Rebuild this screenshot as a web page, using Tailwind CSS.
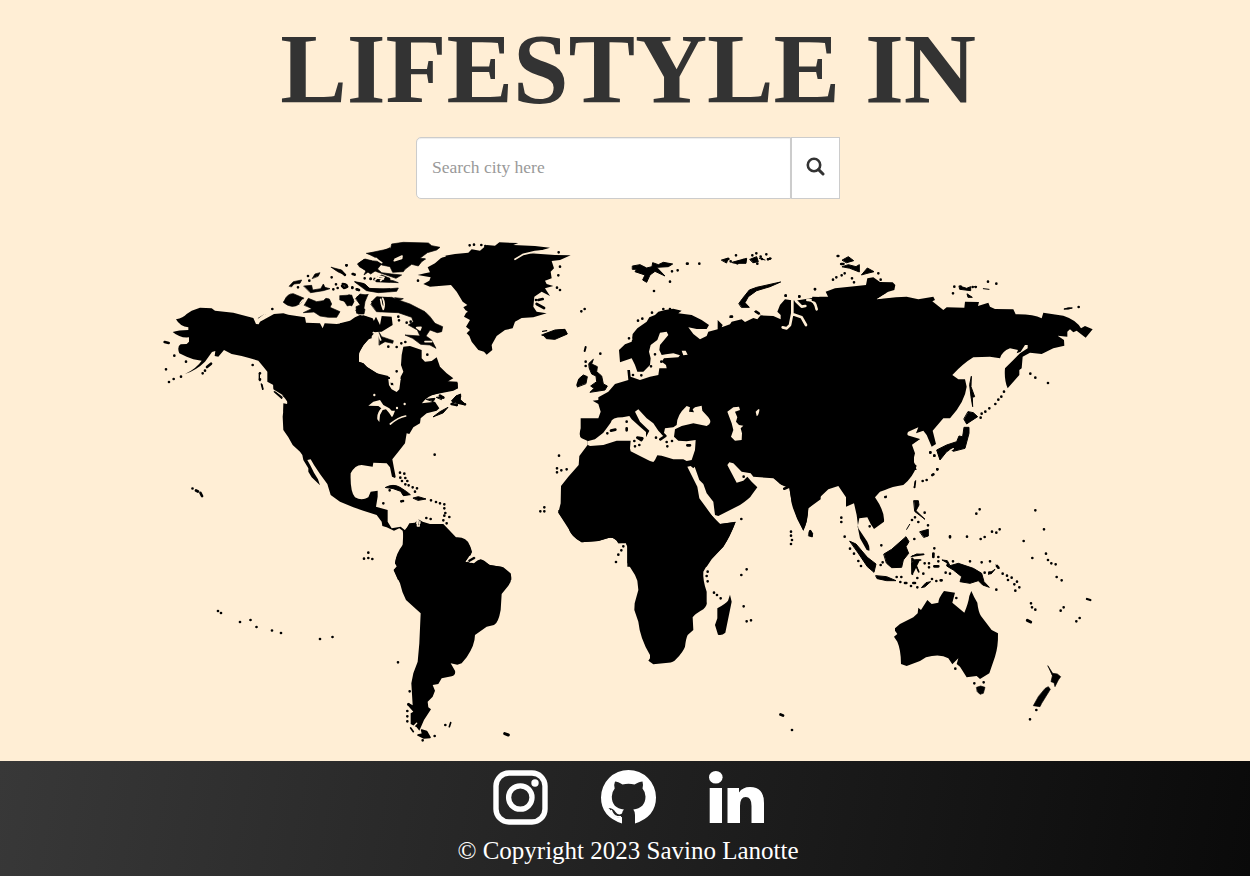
<!DOCTYPE html>
<html lang="en">
<head>
<meta charset="utf-8">
<title>Lifestyle In</title>
<script src="https://cdn.jsdelivr.net/npm/@tailwindcss/browser@4"></script>
</head>
<body class="flex h-[876px] flex-col overflow-hidden bg-[#ffeed5] font-['Liberation_Serif',serif]">
<header class="flex flex-col items-center pt-[14px]">
  <h1 class="h-[110px] pl-[6px] text-[100px] leading-[110px] font-bold tracking-[-0.15px] whitespace-nowrap text-[#333]">LIFESTYLE IN</h1>
  <form class="mt-[13px] ml-[6px] flex h-[62px] w-[424px]">
    <input class="w-[375px] rounded-l-[5px] border border-[#ccc] bg-white px-[15px] pb-[2px] text-[17.5px] shadow-[inset_0_1px_1px_rgba(0,0,0,0.075)] placeholder:text-[#999]" placeholder="Search city here">
    <button type="button" aria-label="Search" class="flex w-[49px] items-center justify-center border border-[#ccc] bg-white pb-[4px]">
      <svg class="size-[19px]" viewBox="0 0 19 19" fill="none" stroke="#333"><circle cx="8" cy="8" r="6.2" stroke-width="2.6"/><path d="M12.6 12.6L17 17" stroke-width="3" stroke-linecap="round"/></svg>
    </button>
  </form>
</header>
<main class="h-[562px] shrink-0">
<svg class="h-[562px] w-[1250px]" viewBox="0 199 1250 562" stroke-linecap="round" stroke-linejoin="round">
<!-- Alaska and western Canada -->
<g transform="translate(150 230) scale(.33333)">
<path d="M78 268Q100 264 110 252L125 242 150 233 185 235 195 242 250 248 310 264 318 282 326 283 330 275 372 252 400 250 415 254 440 258 465 262 468 278 510 280 518 295 524 280 560 282 600 276 612 272 628 262 640 256 668 265 675 280 684 296 668 315 640 345 627 370 627 395 640 400 652 412 690 435 720 442V545H400V520L412 522 408 508 390 490 372 480 370 465 352 455 352 425 340 410 325 392 300 385 275 378 245 372 222 360 205 380 194 378 196 363 186 366 165 395Q140 420 105 432 140 415 155 392L130 388 110 380 88 370Q80 350 92 343L110 342 117 335V322Q90 325 68 306 85 300 115 300V292Q90 290 78 268Z"/>
<path d="M324 265L346 252M403 212Q412 190 430 191L463 205 452 220Q425 240 400 217ZM463 225L475 205 500 215 520 212 528 205 538 207 545 222 540 232 570 245 560 262 535 262 510 258 492 246 460 248 485 236ZM462 168L485 166 488 180 512 176 520 162 525 172 540 176 520 182 482 188ZM418 168L430 155 455 150 450 160 432 162 425 170ZM487 145L495 132 510 128 505 138ZM544 112L575 120 588 135Q565 130 544 112ZM572 208L598 194 610 208 606 224 592 228 583 214ZM617 205L630 192 653 196 645 215 640 245 620 250 618 230 630 225ZM665 215L680 200 720 203V240L690 245Q668 235 665 215ZM615 155L640 160 660 176 720 176V184L655 182ZM623 102L642 88 660 92 700 95 680 120 662 132 645 120ZM650 70L690 68 720 53V90L690 82ZM670 148L695 135 720 145V156L680 155Z" stroke="#000" stroke-width="2"/>
<path d="M44 336L56 339M171 411L183 401" stroke="#000" stroke-width="8"/>
<path d="M575 168Q580 160 590 166 592 172 582 175Z" fill="none" stroke="#000" stroke-width="5"/>
<path d="M367 237h0M308 405h0M330 430h0M330 448h0M73 377h0M108 395h0M48 418h0M57 456h0M71 447h0M93 440h0M158 430h0M165 422h0M474 138h0M478 152h0M444 172h0M545 142h0M590 106h0M608 132h0M614 134h0M550 178h0M558 163h0M563 174h0M607 174h0M622 178h0M627 180h0M662 146h0" stroke="#000" stroke-width="8"/>
<path d="M328 430V450M334 462L338 478M376 486L396 502" stroke="#000" stroke-width="4"/>
<path d="M315 256L324 270 348 250M369 477L385 487 404 498 412 520M599 268L615 265M618 270L632 254M600 262L610 258M692 210L702 236M455 228L463 206M458 210L450 220" stroke="#ffeed5" fill="none" stroke-width="4"/>
</g>
<!-- Eastern Canada, Arctic islands and Greenland -->
<g transform="translate(340 230) scale(.33333)">
<path d="M0 280L30 272 45 262 60 255 85 262 95 285 108 260 120 285 125 258 155 260 158 285 125 305 110 306 95 312 95 325 85 328Q72 342 58 365L55 395 70 400 80 410 110 430 145 438 147 465 155 478 170 487 178 480 182 440 190 425 183 405 185 375 190 350 210 348 245 360V385L255 395 275 393 290 382 300 410 320 430 340 445 322 455 353 458 353 475 340 480 300 488 265 498 245 520 260 545H0Z"/>
<path d="M233 135L255 130 270 127 263 112 285 100 310 78 345 72 385 68 395 58 420 62 440 45 465 47 478 37 535 39 520 45 585 48 630 53 590 65 570 70 645 75 692 76 660 90 635 93 642 115 632 125 635 145 615 152 620 162 640 168 615 175 630 198 605 185 583 200 580 230 590 245 620 250 580 262 545 264 525 275 518 295 495 300 470 318 455 345 457 360 440 374 432 365 415 360 395 335 388 318 380 310 390 300 378 290 390 270 372 260 380 245 370 232 382 225 368 215 350 185 333 165 270 170 250 162 268 152 272 142ZM605 305L622 305M618 317L650 300 672 297 682 312 640 328 620 322Z"/>
<path d="M608 304L620 302M606 315L620 318" stroke="#000" stroke-width="4"/>
<path d="M83 70L130 60 152 55 155 42 190 37 265 39 275 47 300 52 290 60 262 68 240 85 258 86 245 95 235 108 215 103 195 118 190 125 158 127 150 110 125 105 110 85ZM55 100L75 87 95 92 110 115 125 128 155 132 185 135 168 145 110 125 95 118 72 135 78 122 58 110ZM45 156L75 162 88 175 130 178 175 174 170 184 115 188 80 182ZM102 145L110 155 175 158 160 152 135 148ZM93 222L110 203 155 202 190 215 210 222 235 235 255 245 270 260 285 280 308 290 305 305 292 308 270 300 258 318 275 330 288 355 270 345 242 343 218 325 195 315 240 318 232 300 205 285 220 275 215 262 175 248 110 245ZM0 197L35 195 42 215 35 228 12 213 0 210ZM52 200L85 193 70 208 60 220ZM48 240L60 230 75 238 72 252 55 252ZM118 308L125 320 160 332 158 340 135 335 118 345ZM165 203L190 206 175 212Z" stroke="#000" stroke-width="2"/>
<path d="M8 162Q18 162 22 170 12 176 6 168M0 122L15 135" fill="none" stroke="#000" stroke-width="7"/>
<path d="M19 106h0M40 132h0M37 172h0M50 178h0M56 180h0M74 145h0M92 147h0M110 150h0M389 46h0M402 44h0M424 45h0M436 48h0M656 67h0M660 110h0M655 136h0M651 173h0M660 180h0M175 260h0M177 271h0M200 278h0M212 275h0M145 350h0M170 351h0M184 340h0M196 336h0M262 374h0M170 424h0M153 459h0M156 463h0M234 152h0M588 210h0" stroke="#000" stroke-width="8"/>
<path d="M590 222L612 234M595 210L608 207M300 497L310 503M340 515L352 500 360 498 355 518 372 522M335 522L350 525M713 465L718 450" stroke="#000" fill="none" stroke-width="8"/>
<path d="M525 88L550 73 585 65 630 60M122 208Q124 225 130 238 136 220 128 205M163 92L185 85 186 78 165 88M258 84L278 76M108 85Q118 95 125 98M105 150L118 138 132 142 122 152M108 143L130 147M230 293L243 292 240 300ZM285 85L315 78M100 308L115 312 122 330M380 245L370 245M255 335L275 335" fill="none" stroke="#ffeed5" stroke-width="5"/>
<path d="M85 525L105 512 125 520 145 540 105 527M190 522h8M100 494h2M168 535h4" fill="#ffeed5" stroke="#ffeed5" stroke-width="5"/>
</g>
<!-- United States, Central America and the Caribbean -->
<g transform="translate(240 380) scale(.33333)">
<path d="M100 0V28L128 45 142 65 141 74 132 72 128 110 130 150 145 172 158 195 180 215 187 225 190 240 205 265 205 275 215 292 240 316 234 298 222 278 212 258 202 240 212 238 222 255 240 282 262 312 272 345 300 365 340 382 370 392 410 405 425 425 427 438 440 442 462 452 478 445 488 452 492 480 487 500Q467 530 465 550L471 558 461 570 474 600H814L812 580 790 562 750 555 722 538 712 550 695 553 676 545 690 530 696 515Q690 485 665 477L640 472 625 455 607 432 570 432 548 425 535 418 525 428 508 430 500 445 497 452 482 440 455 445 443 425V390L408 380 413 350V332L392 335 385 352Q365 364 345 352 330 335 332 280 345 255 365 255L398 260 400 248 440 250 450 262 456 290 465 294 467 290 462 265 457 238 475 215 495 190 500 160 508 162 520 142 540 130 542 115 560 100 590 92 598 85 585 65 545 70Q560 48 590 42L640 32 654 25 652 5 560 0Z"/>
<path d="M445 -3L447 15 455 28 470 36 478 28 482 -3ZM385 77L400 65 420 60 430 75 448 85 455 92 465 92 460 105 456 112 448 100 438 88 428 90 420 105 418 126 412 118Q410 98 424 85L415 78ZM680 545L695 530 706 530 710 540 695 552Z" fill="#ffeed5"/>
<path d="M451 132Q475 112 497 108" stroke="#ffeed5" stroke-width="5" fill="none"/><path d="M403 45h0M471 84h0M494 72h0" stroke="#ffeed5" stroke-width="7"/>
<path d="M532 418L530 440H538L540 425" fill="none" stroke="#ffeed5" stroke-width="4"/>
<path d="M685 545L702 534" stroke="#000" stroke-width="8"/>
<path d="M635 62L648 48 662 42 660 58 675 72 660 70 650 70ZM580 110L600 95 624 82 610 98ZM437 322Q460 310 480 322L500 335 511 344 490 347 482 334 460 326ZM520 354L535 350 558 357 535 361ZM590 52L610 50 605 58ZM560 58L585 55 580 64ZM453 10L459 14" stroke="#000" stroke-width="3"/>
<path d="M60 2V0M66 14L69 27M103 35L125 55" stroke="#000" stroke-width="4" fill="none"/>
<path d="M584 224h0M480 278h0M493 281h0M481 293h0M496 294h0M486 303h0M502 303h0M496 313h0M506 316h0M518 322h0M531 325h0M525 335h0M449 331h0M430 370h0M484 364h0M489 363h0M573 361h0M588 366h0M600 370h0M613 373h0M613 385h0M616 399h0M613 407h0M628 411h0M610 421h0M620 430h0M559 414h0M572 417h0M385 518h0M385 534h0M397 537h0M372 536h0M650 75h0M675 73h0M456 12h0" stroke="#000" stroke-width="8"/>
</g>
<!-- South America -->
<g transform="translate(350 520) scale(.33333)">
<path d="M180 12L280 12 318 52Q350 50 358 75L365 97 345 125 372 130 Q390 110 405 124L418 135 455 140 482 163Q488 180 475 197L455 222 452 270Q445 310 432 315L410 320 375 345Q375 375 350 412L335 430 322 434 302 430 315 452Q318 465 305 469L275 475 265 492 248 495 255 512 248 530 233 545 235 562 243 568 222 600 208 632 200 622 182 612V580L190 575 172 555 175 548 188 556 184 490 190 460 203 425 208 370 212 280 168 240Q155 215 150 190L131 150 141 140 135 130Q138 100 158 75L160 35Z"/>
<path d="M348 124L358 108 375 102 376 116 362 128Z" fill="#ffeed5"/><path d="M358 122L372 114" stroke="#000" stroke-width="7"/>
<path d="M215 630L230 635 240 652 222 654 204 645 218 642ZM182 624L190 635M298 620L302 608" stroke="#000" stroke-width="5"/>
<path d="M464 641L475 645" stroke="#000" stroke-width="9"/>
<path d="M144 427h0M179 514h0M175 553h0M172 573h0M172 589h0M172 604h0M218 661h0M254 648h0M286 615h0" stroke="#000" stroke-width="8"/>
<path d="M202 0V18H208L206 0M200 610L190 620" fill="none" stroke="#ffeed5" stroke-width="4"/>
</g>
<!-- Europe and northern Russia -->
<g transform="translate(540 230) scale(.33333)">
<path d="M237 360L255 343 275 335 278 312 292 295 320 275 328 262 345 255 355 245 375 240 400 236 425 242 415 250 455 255 485 270 507 285 500 297 470 297 445 292 460 312 480 328 500 318 505 305 533 298V270L548 285 545 292 570 283 575 275 605 268 615 276 640 264 652 268 662 256 700 258 722 268 722 255 712 245 720 225 735 208 765 212 840 200 1000 200 1000 630 145 634 125 625Q115 620 122 595V565L175 565 182 545 175 522 158 512 175 510 175 502 205 485 225 462 265 450 262 420 270 420 272 440 300 450 330 440 355 435 358 415 380 415 378 405 365 395 372 385 415 382 420 376 400 370 378 373 365 375 358 360 360 345 385 315 380 305 360 308 352 330 332 345 327 365 332 385 330 405 310 425 292 425 285 405 275 385 240 397Z"/>
<path d="M425 362L437 362 443 374 430 376ZM263 320L272 318 278 328 268 336ZM650 540Q662 535 656 555 645 560 650 540Z" fill="#ffeed5"/>
<path d="M757 212V250L750 285 740 295 728 292M757 252L785 262 798 285M768 213L785 230 796 228M802 210Q825 208 830 238" fill="none" stroke="#ffeed5" stroke-width="8"/>
<path d="M147 400L160 388 155 402 172 410 170 425 185 438 190 462 202 468 195 480 150 487 162 475 152 468 170 455 168 438 155 432 148 415ZM112 470L118 445 130 435 142 440 138 460ZM597 220L608 205 628 180 650 172 722 156 690 170 650 182 625 200 615 218 628 232 605 232ZM278 108L300 104 320 114 336 110 338 98 355 104 370 97 398 102 385 110 350 112 375 138 345 124 330 135 320 157 308 150 315 135 285 125 290 118 278 118ZM10 313L45 300 75 298 82 312 45 328 20 326ZM545 90L565 84 560 98ZM576 97L620 85 618 100 585 100ZM630 88L650 80 655 95 640 98ZM644 245L660 252M570 262L574 258M658 85L675 90M682 86L694 85" stroke="#000" stroke-width="3"/>
<path d="M134 363L137 351" stroke="#000" stroke-width="6"/>
<path d="M565 87h0M572 94h0M588 76h0M592 100h0M610 90h0M637 76h0M649 70h0M662 80h0M679 73h0M684 88h0M690 86h0M666 87h0M652 101h0M443 101h-2M478 101h0M396 124h0M413 121h0M390 155h0M342 183h0M134 237h0M124 244h0M181 371h0M137 395h0M137 408h0M294 272h0M307 266h0M336 248h0M390 237h0M267 325h0M333 409h0M345 373h0M364 395h0M279 435h0M304 436h0M737 197h0M778 200h0M825 177h0M572 260h4M648 245l8 5M370 237h0" stroke="#000" stroke-width="8"/>
</g>
<!-- Siberia, Far East and Japan -->
<g transform="translate(780 240) scale(.33333)">
<path d="M0 290L20 272 80 268 115 225 115 188 95 182 97 170 145 172 137 155 165 145 230 138 258 135 262 115 280 112 300 126 338 127 346 135 343 150 325 155 290 178 348 172 380 170 415 178 460 170 465 180 457 184 490 210 500 202 553 203 555 185 597 186 594 198 625 188 630 200 645 207 700 208 707 223 Q760 222 785 235L790 218 850 227Q890 240 903 265L915 258 938 268 917 293 890 272 880 277 870 268 862 275 862 290 833 287 852 300 853 317 820 325 785 342 750 338 728 350 725 385 718 390 718 405 683 445Q672 420 675 385L700 360 720 340 743 325V315H735L722 335 710 340 714 330 690 325Q665 335 660 355L630 350 580 352Q550 370 517 405L535 418 555 418 560 440Q555 485 510 535L490 535 458 572 468 612 455 620 440 585 430 572 408 580 415 562 385 575Q376 585 395 597L420 597 395 612 405 640 400 660 410 690H0Z"/>
<path d="M290 178L310 166 325 158 320 172Z" fill="#ffeed5"/>
<path d="M320 160L342 155M318 172L345 168M328 165L342 163" stroke="#ffeed5" stroke-width="3"/>
<path d="M187 60L205 50 221 62 200 68ZM181 72L192 71M187 80L205 74 228 80 238 74V96L210 85ZM245 104L262 84 282 95 262 100ZM565 515L580 518 593 530 570 545 560 552 552 538ZM553 562L567 562 567 580 555 625 520 634 512 628 500 635 480 660 470 630 500 615 530 605 537 588 547 590ZM574 410L573 440 584 470 577 472 578 500 573 470 569 435ZM538 138L560 145 572 140V152L540 148ZM582 140L590 140M610 146L627 148M853 207Q865 201 877 204 866 209 853 207ZM562 162L577 172 565 172Z" stroke="#000" stroke-width="3"/>
<path d="M510 632L520 626" stroke="#ffeed5" stroke-width="4"/>
<path d="M173 48h2M184 72h6M159 119h0M169 112h0M185 106h0M194 100h0M216 115h0M222 127h0M295 100h0M302 119h0M105 148h0M17 167h0M58 169h0M523 140h0M519 160h0M624 125h0M649 131h0M896 201h0M751 401h0M766 413h0M804 429h0M672 455h0M664 470h0M655 479h0M646 492h0M628 505h0M616 515h0M605 521h0M602 533h0M451 637h0M463 647h0M472 688h0M542 140h0M587 141h0M578 141h0" stroke="#000" stroke-width="8"/>
</g>
<!-- North Africa, Arabia and the Mediterranean -->
<g transform="translate(540 380) scale(.33333)">
<path d="M142 196L118 228 116 255 85 290 63 318 62 370 55 398 85 440Q88 465 125 487L175 483 205 474Q225 470 235 490L258 490 262 500V560H500L515 538 550 500Q570 470 587 425L540 432 525 420 500 385 478 355 472 320 442 260 452 258 460 265 464 260 478 300 490 312 500 340 520 365 525 405 535 408 600 375Q630 355 635 345L652 322 635 305 622 290 610 302 590 308 575 280 562 255 568 247 580 250 605 275 632 280 640 290 700 295 725 315 748 325 755 365 770 410 790 452 800 425 805 385 842 358V0H300L200 100 142 184Z"/>
<path d="M142 184L165 178 190 158 212 128Q215 112 248 112L268 108 275 118 300 140 318 156 318 172 328 152 300 125 285 95 295 88 320 115 340 130 355 152 370 168 375 145 400 142 410 135Q410 105 440 78L450 82 447 95 462 97 458 88 465 82 485 77 487 92 505 112Q520 130 500 138L460 130 425 138 405 148 402 170 415 182 440 184 467 180 465 210 455 240 440 243 430 238 400 238 365 227 352 226 345 240 340 246 330 243 300 228 272 214 270 205 272 182 230 182 190 195 150 198 142 194ZM562 95L580 82 597 80 600 90 585 95 592 112 588 125 597 135 610 137 602 145 606 160 605 180 585 182 573 170 580 150 575 130ZM647 95Q660 80 658 92 655 108 650 108Z" fill="#ffeed5"/>
<path d="M213 152L226 149M292 173L307 175 304 180ZM442 196L450 196M260 145V151M361 178L376 168 368 160M733 326L743 322" fill="none" stroke="#000" stroke-width="8"/>
<path d="M260 125h0M202 160h0M283 183h0M285 199h0M298 195h0M348 173h0M380 186h0M396 183h0M382 199h0M57 227h0M51 265h0M51 277h0M64 271h0M80 268h0M13 382h0M13 394h0M1 394h0M604 417h0M611 290h0M250 499h0M244 511h0M235 524h0M753 455h0M753 467h0M756 480h0M753 492h0" stroke="#000" stroke-width="8"/>
<path d="M812 449Q820 458 818 470 810 472 806 465 804 452 812 449Z"/>
</g>
<!-- Southern Africa and Madagascar -->
<g transform="translate(540 510) scale(.33333)">
<path d="M55 8L88 60Q95 80 125 97L175 93 205 84Q225 80 235 100L258 98 262 110V158L285 195 292 212 295 240 284 280 283 300 295 335Q300 385 330 435V445L325 452 340 463 385 458Q400 458 408 448 430 425 435 410 438 385 443 375L460 360 458 322Q465 312 490 298 503 285 500 275V245Q488 210 490 185L510 150 550 110Q570 80 587 36L540 42 500 0H55Z"/>
<path d="M570 254L575 275 556 368Q545 378 534 374L525 345 532 325 532 295Q558 280 564 272Z"/>
<path d="M228 156h0M503 185h0M500 198h0M503 214h0M522 248h0M531 255h0M542 265h0M604 195h0M620 178h0M611 289h0M620 334h0M633 331h0" stroke="#000" stroke-width="8"/>
</g>
<!-- South-East Asia and the Pacific -->
<g transform="translate(780 400) scale(.33333)">
<path d="M-30 220L0 252 28 262 35 310Q45 350 70 392 84 365 85 325L145 268 175 258 198 292V320L222 310 230 345 235 385 262 425Q270 440 268 452L260 450 240 415 233 380 238 355 262 352 272 372 282 387 312 365Q315 335 285 292L300 275 315 270Q335 260 370 255 400 230 410 197L402 190V170L395 135 420 117 380 105 380 0H-30Z"/>
<path d="M210 424L228 432 262 472 288 492 282 517 262 500 235 460ZM288 527L320 530 348 542 320 542 292 536ZM312 462L335 448 378 410 387 425 378 440 386 460 370 480 365 502 335 503 320 490ZM402 302L415 302 417 315 408 332 435 358 405 335ZM420 395L445 388 445 408 432 412ZM393 470L410 462 432 463M398 524L395 490 408 480 420 480M404 482L416 516M425 562L438 548 452 545 435 560ZM487 480L502 482 510 497 535 490 580 505 605 520 612 545 628 562 608 555 595 542 570 550 540 545 545 530 520 510 500 498 502 490ZM625 522L645 508 635 520ZM648 495L657 505M380 388L389 373M402 262L407 242M460 470L462 460M315 292L320 288M457 225L460 222" stroke="#000" stroke-width="3"/>
<path d="M396 475L396 522M398 476L416 515M398 468L430 463M403 480L422 480M406 245L404 262" stroke="#000" stroke-width="5" fill="none"/>
<path d="M184 353h0M184 366h0M194 410h0M210 446h0M222 461h0M235 483h0M243 498h0M269 379h0M304 436h0M302 495h0M308 487h0M316 291h1M457 225l3 -2M451 158h0M463 167h0M472 208h0M440 240h0M428 243h0M434 338h0M405 352h0M396 360h0M415 366h0M444 376h0M403 417h0M350 531h0M364 531h0M361 546h0M375 549h4M400 549h5M393 558h0M412 562h0M412 534h0M430 521h0M456 537h0M469 543h0M482 541h3M434 490h0M447 490h0M447 502h0M463 499h12M475 471h0M475 484h0M463 445h0M460 461v10M519 484h0M497 518h0M510 521h0M510 409v3M561 410h0M602 417h0M614 411h0M636 395h0M649 398h0M659 388h0M589 341h0M599 328h0M766 331h0M792 388h0M731 423h0M757 474h0M798 461h0M804 480h0M814 490h0M827 493h0M830 531h0M845 541h0M570 484h0M605 487h0M630 484h0M614 518h0M668 521h0M681 527h0M684 540h0M695 533h0M711 545h0M703 553h0M718 562h0M706 572h0M649 569h0M628 518h4M651 498l4 5" stroke="#000" stroke-width="8"/>
<path d="M90 391L98 400 97 411 86 408Z" stroke="#000" stroke-width="2"/>
</g>
<!-- Australia and New Zealand -->
<g transform="translate(820 560) scale(.33333)">
<path d="M225 205L240 192 280 172 293 160 295 143 303 150 322 120 335 132 355 128Q355 115 372 93L405 98 397 128 433 158Q445 130 448 108L454 93Q462 112 472 128 475 155 483 168L515 210 534 220Q535 260 525 290L508 340 480 357 470 348 440 352 420 320 410 312 415 295 397 313 385 295Q360 280 318 292L300 303 260 318 243 312Q243 270 232 245L222 230 232 222 225 212Z"/>
<path d="M470 382L482 378 495 382 490 400 480 403 472 395ZM684 318L698 340 712 342 722 350 715 360 705 380 702 368 693 365 697 348ZM676 385L685 380 691 388 665 430 660 440 640 437 655 410Z" stroke="#000" stroke-width="2"/>
<path d="M622 181L632 186" stroke="#000" stroke-width="9"/><path d="M801 117L811 120" stroke="#000" stroke-width="7"/>
<path d="M409 114h0M406 326h0M463 370h0M491 367h0M649 450h0M630 478h0M633 130h0M636 142h0M646 149h0M722 152h0M731 142h0M769 184h0M779 174h0" stroke="#000" stroke-width="8"/>
</g>
<!-- Remote islands -->
<path d="M192.500 488.500h0M196 490.500l2 1M200.500 493l1.500 3M218 611h0M221 613h0M240 622h0M250.500 620h0M256.500 627h0M272 630.500h0M281 633h0M320 639h0M332.500 637h0M792 730h0M780.500 714.500l2.500 1" stroke="#000" stroke-width="2.700" fill="none"/>
</svg>
</main>
<footer class="flex h-[115px] shrink-0 flex-col items-center bg-[linear-gradient(100deg,#383838,#0a0a0a)] pl-[6px] text-white">
  <div class="mt-[9px] flex gap-[53px]">
    <svg class="size-[55px]" viewBox="0 0 55 55" fill="none" stroke="#fff"><rect x="3" y="3" width="49" height="49" rx="13" stroke-width="5.400"/><circle cx="27.300" cy="27.500" r="11.700" stroke-width="5.300"/><circle cx="42" cy="13" r="3.700" fill="#fff" stroke="none"/></svg>
    <svg class="size-[55px]" viewBox="0 0 55 55"><path fill="#fff" d="M27.500 0A27.500 27.500 0 0 0 0 27.500Q0 46.500 21 53.500V47Q13 49 10.500 42 9 39 7.500 38 12 38 14.500 42 17 46 21 43.500Q21.500 40.500 23 39.500C15 38.500 10.800 34.500 10.800 26.500Q10.800 22 13.700 18.500Q12.500 15 14 11.500Q17 11.500 21.500 14.500Q27.500 13 33.500 14.500Q38.500 11.500 41.500 11.500Q42.500 15 41.500 18.500Q44.500 22 44.500 26.500C44.500 34.500 40 38.500 32.300 39.500Q34 41.500 34 45V53.500Q55 46.500 55 27.500A27.500 27.500 0 0 0 27.500 0Z"/><path d="M10 40q2 6 6 6.700l4 .3" stroke="#fff" stroke-width="1.800" fill="none"/></svg>
    <svg class="size-[55px]" viewBox="0 0 55 55" fill="#fff"><ellipse cx="6.800" cy="7.200" rx="6.800" ry="6.300"/><path d="M.7 18H13V53H.7ZM18.500 18H30V22.500Q33.500 17 41 17 55 17 55 33V53H42.500V36Q42.500 27 36.700 27 31 27 31 36V53H18.500Z"/></svg>
  </div>
  <p class="mt-[11px] text-[25px] leading-[30px] whitespace-nowrap">© Copyright 2023 Savino Lanotte</p>
</footer>
</body>
</html>
